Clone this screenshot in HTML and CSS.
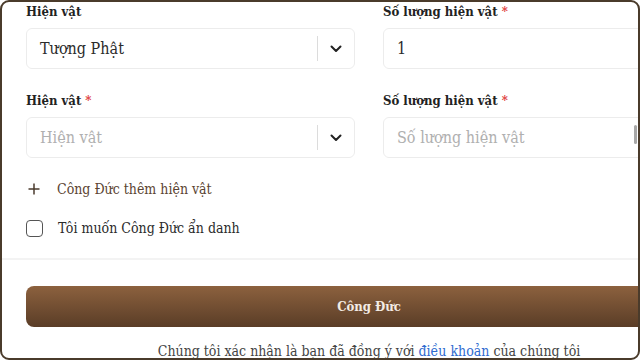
FILE: index.html
```html
<!DOCTYPE html>
<html lang="vi">
<head>
  <meta charset="UTF-8">
  <meta name="viewport" content="width=device-width, initial-scale=1.0">
  <title>Công Đức hiện vật</title>
  <link rel="stylesheet" href="styles.css">
</head>

<body>
  <div class="modal">
    <div class="content">

      <div class="row">
        <div class="field">
          <label class="label">Hiện vật</label>
          <div class="select">
            <span class="value">Tượng Phật</span>
            <span class="indicator">
              <svg width="12" height="8" viewBox="0 0 12 8"><path d="M1.5 1.5 L6 6 L10.5 1.5" fill="none" stroke="#222" stroke-width="2" stroke-linecap="round" stroke-linejoin="round"/></svg>
            </span>
          </div>
        </div>
        <div class="field">
          <label class="label">Số lượng hiện vật <span class="req">*</span></label>
          <div class="input"><span class="value">1</span></div>
        </div>
      </div>

      <div class="row">
        <div class="field">
          <label class="label">Hiện vật <span class="req">*</span></label>
          <div class="select">
            <span class="placeholder">Hiện vật</span>
            <span class="indicator">
              <svg width="12" height="8" viewBox="0 0 12 8"><path d="M1.5 1.5 L6 6 L10.5 1.5" fill="none" stroke="#222" stroke-width="2" stroke-linecap="round" stroke-linejoin="round"/></svg>
            </span>
          </div>
        </div>
        <div class="field">
          <label class="label">Số lượng hiện vật <span class="req">*</span></label>
          <div class="input"><span class="placeholder">Số lượng hiện vật</span></div>
        </div>
      </div>

      <div class="add-item">
        <svg width="12" height="12" viewBox="0 0 12 12"><path d="M6 0.5 V11.5 M0.5 6 H11.5" stroke="#4a3a2c" stroke-width="1.5"/></svg>
        <span>Công Đức thêm hiện vật</span>
      </div>

      <label class="check">
        <span class="box"></span>
        <span>Tôi muốn Công Đức ẩn danh</span>
      </label>
    </div>

    <div class="divider"></div>

    <div class="content">
      <button class="btn">Công Đức</button>
      <p class="terms">Chúng tôi xác nhận là bạn đã đồng ý với <a href="#">điều khoản</a> của chúng tôi</p>
    </div>

    <div class="scroll-thumb"></div>
  </div>
</body>
</html>
```

FILE: styles.css
```css
* {
  box-sizing: border-box;
}

body {
  margin: 0;
  background: white;
  font-family: "DejaVu Serif Condensed", "DejaVu Serif", "Liberation Serif", serif;
  font-stretch: condensed;
  color: #2b2b2b;
}

.modal {
  position: relative;
  width: 640px;
  height: 360px;
  border: 2px solid #4a3b2b;
  border-radius: 9px;
  overflow: hidden;
  background: white;
}

.content {
  width: 710px;
  padding-left: 24px;
}

.row {
  display: grid;
  grid-template-columns: 329px 329px;
  column-gap: 28px;
  margin-bottom: 22px;
}

.label {
  display: block;
  font-size: 13px;
  font-weight: bold;
  color: #222;
  line-height: 20px;
  margin-bottom: 6px;
}

.req {
  color: #e04040;
}

.select,
.input {
  display: flex;
  align-items: center;
  height: 41px;
  border: 1px solid #ececec;
  border-radius: 6px;
  font-size: 16px;
}

.value {
  padding-left: 13px;
  flex: 1;
  color: #2b2b2b;
}

.placeholder {
  padding-left: 13px;
  flex: 1;
  color: #b0b0b0;
}

.indicator {
  display: flex;
  align-items: center;
  justify-content: center;
  width: 37px;
  height: 25px;
  border-left: 1px solid #dcdcdc;
}

.add-item {
  display: flex;
  align-items: center;
  gap: 17px;
  padding-left: 2px;
  height: 18px;
  font-size: 14px;
  color: #5b4432;
}

.check {
  display: flex;
  align-items: center;
  gap: 15px;
  height: 20px;
  margin-top: 20px;
  font-size: 14px;
  color: #2b2b2b;
}

.box {
  width: 17px;
  height: 17px;
  border: 1.5px solid #555;
  border-radius: 4px;
}

.divider {
  height: 2px;
  background: #f3f3f3;
  margin-top: 20px;
}

.btn {
  display: block;
  width: 100%;
  height: 41px;
  margin-top: 26px;
  border: none;
  border-radius: 8px;
  background: linear-gradient(#8c613e, #5a3d27);
  color: #f3ece4;
  font-family: inherit;
  font-stretch: condensed;
  font-size: 13px;
  font-weight: bold;
}

.terms {
  margin: 14px 0 0;
  line-height: 20px;
  text-align: center;
  font-size: 14px;
  color: #444;
}

.terms a {
  color: #2e6bd0;
  text-decoration: none;
}

.scroll-thumb {
  position: absolute;
  right: 1px;
  top: 123px;
  width: 3px;
  height: 19px;
  border-radius: 2px;
  background: #a8a8a8;
}
```
